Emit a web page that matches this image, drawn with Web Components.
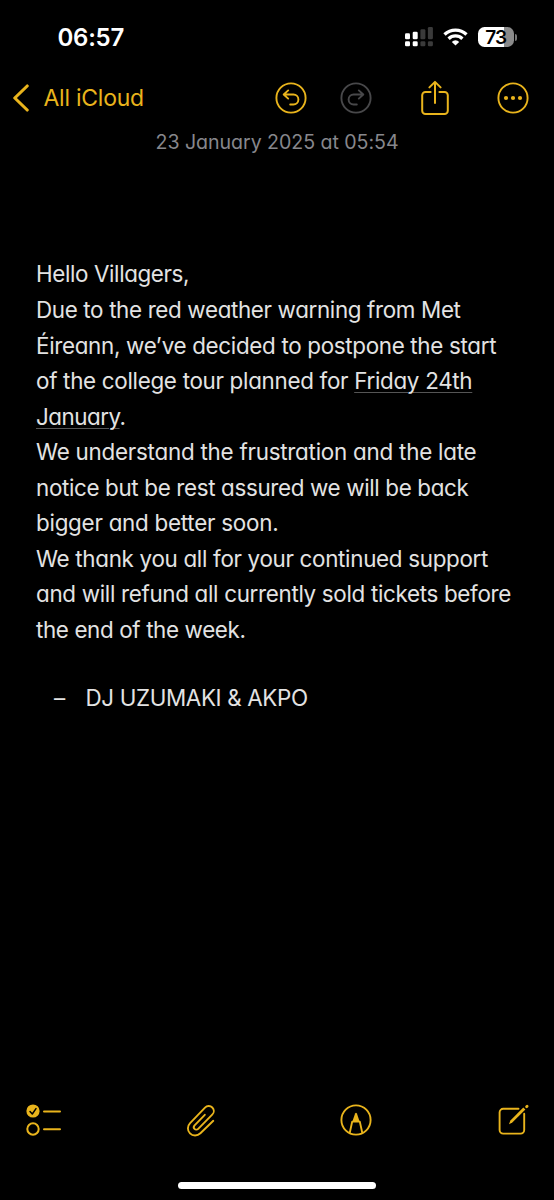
<!DOCTYPE html>
<html lang="en">
<head>
<meta charset="utf-8">
<title>Notes</title>
<style>
  body {
    margin: 0;
    background: #000;
    font-family: Inter, "Liberation Sans", sans-serif;
  }
</style>
</head>
<body>
<notes-app></notes-app>

<script>
class StatusBar extends HTMLElement {
  constructor() {
    super();
    const shadow = this.attachShadow({ mode: 'open' });
    shadow.innerHTML = `
      <style>
        :host {
          display: flex;
          justify-content: space-between;
          align-items: center;
          height: 74px;
          padding: 0 37.5px 0 57.5px;
          box-sizing: border-box;
          color: #fff;
        }
        .time {
          font-size: 24px;
          font-weight: 600;
          letter-spacing: -0.25px;
        }
        .icons {
          display: flex;
          align-items: center;
        }
        .wifi { margin-left: 10px; }
        .battery {
          display: flex;
          align-items: center;
          justify-content: center;
          width: 35.5px;
          height: 20px;
          margin-left: 10px;
          border-radius: 6.5px;
          background: linear-gradient(90deg, #fff 73%, #8a8a8a 73%);
          color: #000;
          font-size: 19px;
          font-weight: 600;
          letter-spacing: -0.8px;
        }
        .cap {
          width: 2px;
          height: 7px;
          margin: 0 0 0 1px;
          border-radius: 0 2px 2px 0;
          background: #777;
        }
      </style>
      <div class="time">06:57</div>
      <div class="icons">
        <svg width="28" height="20" viewBox="0 0 28 20">
          <g fill="#fff">
            <rect x="0" y="6.3" width="5" height="6" rx="1.3"/>
            <rect x="7.7" y="4.8" width="5" height="7.5" rx="1.3"/>
            <rect x="0" y="14.3" width="5" height="5" rx="1.3"/>
            <rect x="7.7" y="14.3" width="5" height="5" rx="1.3"/>
          </g>
          <g fill="#3a3a3a">
            <rect x="15.4" y="2.3" width="5" height="10" rx="1.3"/>
            <rect x="22.9" y="0" width="5" height="12.3" rx="1.3"/>
            <rect x="15.4" y="14.3" width="5" height="5" rx="1.3"/>
            <rect x="22.9" y="14.3" width="5" height="5" rx="1.3"/>
          </g>
        </svg>
        <svg class="wifi" width="25" height="18" viewBox="0 0 25 18" fill="none" stroke="#fff" stroke-width="3.3">
          <path d="M1.5 6.5 A15.8 15.8 0 0 1 23.5 6.5"/>
          <path d="M5.6 10.7 A9.9 9.9 0 0 1 19.4 10.7"/>
          <path d="M12.5 17.6 L8.8 13.9 A5.2 5.2 0 0 1 16.2 13.9 Z" fill="#fff" stroke="none"/>
        </svg>
        <div class="battery">73</div>
        <div class="cap"></div>
      </div>
    `;
  }
}

customElements.define('status-bar', StatusBar);

const ICONS = {
  undo: {
    width: 32, height: 32, stroke: 1.9,
    body: `
      <circle cx="16" cy="16" r="14.6"/>
      <path d="M13.2 8.4 L8.7 12.5 L13.2 16.6 M9.1 12.5 H18.4 A5 5 0 0 1 18.4 22.5 H15.2"/>`
  },
  redo: {
    width: 32, height: 32, stroke: 1.9,
    body: `
      <circle cx="16" cy="16" r="14.6"/>
      <path d="M18.8 8.4 L23.3 12.5 L18.8 16.6 M22.9 12.5 H13.6 A5 5 0 0 0 13.6 22.5 H16.8"/>`
  },
  share: {
    width: 28, height: 36, stroke: 2,
    body: `
      <path d="M9.6 12 H4.5 A3.3 3.3 0 0 0 1.2 15.3 V30.7 A3.3 3.3 0 0 0 4.5 34 H23.5 A3.3 3.3 0 0 0 26.8 30.7 V15.3 A3.3 3.3 0 0 0 23.5 12 H18.4"/>
      <path d="M14 23 V2.2 M8.4 7.4 L14 1.9 L19.6 7.4"/>`
  },
  more: {
    width: 32, height: 32, stroke: 1.9,
    body: `
      <circle cx="16" cy="16" r="14.6"/>
      <g fill="currentColor" stroke="none">
        <circle cx="9" cy="16" r="2.1"/>
        <circle cx="16" cy="16" r="2.1"/>
        <circle cx="23" cy="16" r="2.1"/>
      </g>`
  },
  checklist: {
    width: 35, height: 32, stroke: 2,
    body: `
      <circle cx="7" cy="7" r="6.6" fill="currentColor" stroke="none"/>
      <path d="M4 7.5 L6.3 10 L10 4.6" stroke="#000" stroke-width="1.5"/>
      <circle cx="7" cy="25" r="5.7"/>
      <path d="M18 7.4 H34 M18 25.2 H34"/>`
  },
  clip: {
    width: 32, height: 34, stroke: 1.9,
    body: `
      <path d="M28.3 17.8 L15.4 30.3 C12.3 33.3 7.7 33.2 5 30.4 C2.2 27.6 2.2 23.2 5.1 20.2 L20 4.6 C22 2.6 25.3 2.5 27.3 4.5 C29.3 6.5 29.3 9.6 27.2 11.7 L13.2 25.8 C12.1 26.9 10.5 26.9 9.5 25.9 C8.5 24.9 8.6 23.4 9.6 22.3 L19.8 11.8"/>`
  },
  markup: {
    width: 32, height: 32, stroke: 1.9,
    body: `
      <circle cx="16" cy="16" r="14.6"/>
      <path d="M9.7 29 L12.2 17.6 H19.8 L22.3 29"/>
      <path d="M12.2 18 L15.1 9.6 Q16 7.8 16.9 9.6 L19.8 18 Z" fill="currentColor" stroke="none"/>`
  },
  compose: {
    width: 32, height: 32, stroke: 1.9,
    body: `
      <path d="M20.5 4.8 H5.2 A3.6 3.6 0 0 0 1.6 8.4 V26 A3.6 3.6 0 0 0 5.2 29.6 H22.6 A3.6 3.6 0 0 0 26.2 26 V9.8"/>
      <path d="M25.3 3.4 L27.4 5.5 L14.3 18.5 L11 20.2 L12.4 16.6 Z" fill="currentColor" stroke="none"/>
      <path d="M28.6 2.7 L29.1 2.2" stroke-width="2.8"/>`
  }
};

class NoteIcon extends HTMLElement {
  constructor() {
    super();
    const shadow = this.attachShadow({ mode: 'open' });
    const icon = ICONS[this.getAttribute('name')];
    shadow.innerHTML = `
      <style>
        :host { display: block; flex: none; }
        svg { display: block; }
      </style>
      <svg width="${icon.width}" height="${icon.height}" viewBox="0 0 ${icon.width} ${icon.height}"
        fill="none" stroke="currentColor" stroke-width="${icon.stroke}"
        stroke-linecap="round" stroke-linejoin="round">${icon.body}</svg>
    `;
  }
}

customElements.define('note-icon', NoteIcon);

class NavBar extends HTMLElement {
  constructor() {
    super();
    const shadow = this.attachShadow({ mode: 'open' });
    shadow.innerHTML = `
      <style>
        :host {
          display: flex;
          align-items: center;
          height: 48px;
          padding: 0 25px 0 12px;
          color: #e9b41c;
        }
        .back {
          display: flex;
          align-items: center;
          gap: 14.5px;
          flex: 1;
          font-size: 23px;
          letter-spacing: -0.25px;
        }
        .history, .actions { display: flex; align-items: center; }
        .history { gap: 33px; }
        .actions { gap: 48.5px; margin-left: 49px; }
        .disabled { color: #48484a; }
      </style>
      <div class="back">
        <svg width="17" height="28" viewBox="0 0 17 28" fill="none" stroke="currentColor"
          stroke-width="3.1" stroke-linecap="round" stroke-linejoin="round">
          <path d="M15.2 2 L2.8 14 L15.2 26"/>
        </svg>
        <span><slot></slot></span>
      </div>
      <div class="history">
        <note-icon name="undo"></note-icon>
        <note-icon name="redo" class="disabled"></note-icon>
      </div>
      <div class="actions">
        <note-icon name="share"></note-icon>
        <note-icon name="more"></note-icon>
      </div>
    `;
  }
}

customElements.define('nav-bar', NavBar);

class NoteLine extends HTMLElement {
  constructor() {
    super();
    const shadow = this.attachShadow({ mode: 'open' });
    const track = this.getAttribute('track') || '-0.32';
    shadow.innerHTML = `
      <style>
        :host {
          display: block;
          white-space: nowrap;
          letter-spacing: ${track}px;
        }
        ::slotted(u) {
          text-decoration-color: #555;
          text-decoration-thickness: 1px;
          text-underline-offset: 3px;
        }
      </style>
      <slot></slot>
    `;
  }
}

customElements.define('note-line', NoteLine);

class NoteBody extends HTMLElement {
  constructor() {
    super();
    const shadow = this.attachShadow({ mode: 'open' });
    shadow.innerHTML = `
      <style>
        :host {
          display: block;
          flex: 1;
          color: #e3e3e3;
          font-feature-settings: "cv11";
        }
        .date {
          height: 40px;
          line-height: 40px;
          text-align: center;
          color: #87878c;
          font-size: 19.6px;
          letter-spacing: -0.05px;
        }
        .text {
          padding: 94.4px 0 0 36px;
          font-size: 22.4px;
          line-height: 35.57px;
        }
        .signature {
          display: flex;
          gap: 20.3px;
          padding: 32.4px 0 0 54px;
          font-size: 22.4px;
          line-height: 35px;
        }
      </style>
      <div class="date">23 January 2025 at 05:54</div>
      <div class="text">
        <note-line track="-0.38">Hello Villagers,</note-line>
        <note-line track="-0.35">Due to the red weather warning from Met</note-line>
        <note-line track="-0.32">Éireann, we’ve decided to postpone the start</note-line>
        <note-line track="-0.3">of the college tour planned for <u>Friday 24th</u></note-line>
        <note-line track="-0.5"><u>January</u>.</note-line>
        <note-line track="-0.24">We understand the frustration and the late</note-line>
        <note-line track="-0.35">notice but be rest assured we will be back</note-line>
        <note-line track="-0.25">bigger and better soon.</note-line>
        <note-line track="-0.31">We thank you all for your continued support</note-line>
        <note-line track="-0.32">and will refund all currently sold tickets before</note-line>
        <note-line track="-0.37">the end of the week.</note-line>
      </div>
      <div class="signature">
        <span>–</span>
        <note-line track="-0.36">DJ UZUMAKI &amp; AKPO</note-line>
      </div>
    `;
  }
}

customElements.define('note-body', NoteBody);

class ToolBar extends HTMLElement {
  constructor() {
    super();
    const shadow = this.attachShadow({ mode: 'open' });
    shadow.innerHTML = `
      <style>
        :host {
          display: grid;
          grid-template-columns: 159px 155.3px 1fr auto;
          align-items: center;
          height: 60px;
          padding: 0 24px 0 26px;
          color: #e9b41c;
        }
      </style>
      <note-icon name="checklist"></note-icon>
      <note-icon name="clip"></note-icon>
      <note-icon name="markup"></note-icon>
      <note-icon name="compose"></note-icon>
    `;
  }
}

customElements.define('tool-bar', ToolBar);

class NotesApp extends HTMLElement {
  constructor() {
    super();
    const shadow = this.attachShadow({ mode: 'open' });
    shadow.innerHTML = `
      <style>
        :host {
          display: flex;
          flex-direction: column;
          width: 554px;
          height: 1200px;
          overflow: hidden;
          background: #000;
        }
        .home {
          flex: none;
          width: 198px;
          height: 7px;
          margin: 31.5px 0 11.5px 178.3px;
          border-radius: 4px;
          background: #fff;
        }
      </style>
      <status-bar></status-bar>
      <nav-bar>All iCloud</nav-bar>
      <note-body></note-body>
      <tool-bar></tool-bar>
      <div class="home"></div>
    `;
  }
}

customElements.define('notes-app', NotesApp);
</script>
</body>
</html>
